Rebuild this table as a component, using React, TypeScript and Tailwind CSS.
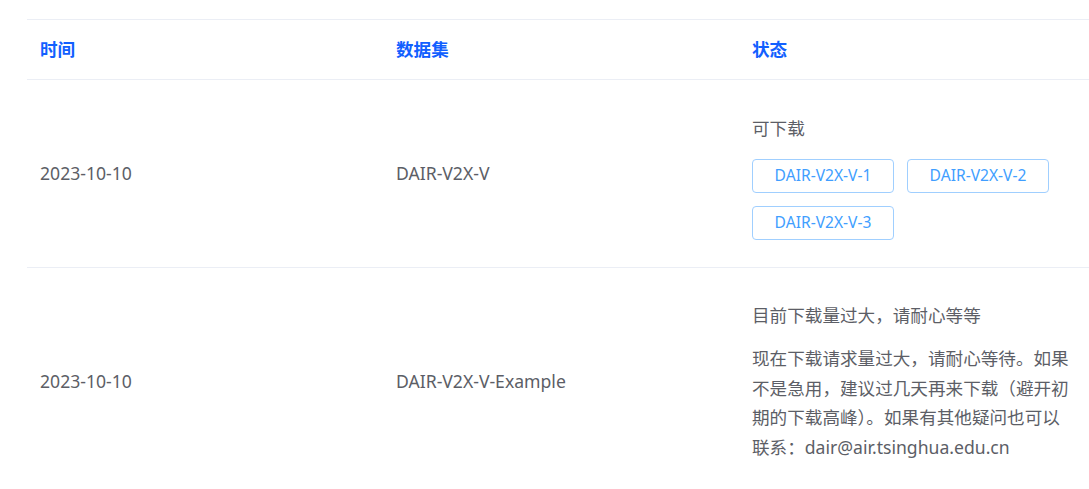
const FONT = "font-['Noto_Sans','Noto_Sans_CJK_SC',sans-serif]";

function Tag({ label }: { label: string }) {
  return (
    <span className="flex h-[34px] w-[142px] items-center justify-center rounded-[4px] border border-[#a0cfff] bg-white text-[15.6px] text-[#409eff]">
      {label}
    </span>
  );
}

function Cell({ children, className = '' }: { children: React.ReactNode; className?: string }) {
  return <div className={`px-[13px] ${className}`}>{children}</div>;
}

export default function App() {
  return (
    <div className={`min-h-screen w-full overflow-hidden bg-white ${FONT}`}>
      <div className="ml-[27px] mt-[19px] w-[1068px] text-[17.6px] text-[#5c5e66]">
        {/* header */}
        <div className="grid h-[61px] grid-cols-3 items-center border-y border-[#ebeef5] font-bold text-[#1260ff]">
          <Cell>时间</Cell>
          <Cell>数据集</Cell>
          <Cell>状态</Cell>
        </div>

        <div className="grid grid-cols-3 items-center border-b border-[#ebeef5]">
          <Cell>2023-10-10</Cell>
          <Cell>DAIR-V2X-V</Cell>
          <Cell className="pb-[27px] pt-[33px]">
            <p className="leading-[30px]">可下载</p>
            <div className="mt-[16px] flex flex-wrap gap-[13px]">
              <Tag label="DAIR-V2X-V-1" />
              <Tag label="DAIR-V2X-V-2" />
              <Tag label="DAIR-V2X-V-3" />
            </div>
          </Cell>
        </div>

        <div className="grid grid-cols-3 items-center border-b border-[#ebeef5]">
          <Cell>2023-10-10</Cell>
          <Cell>DAIR-V2X-V-Example</Cell>
          <Cell className="py-8">
            <p className="leading-[30px]">目前下载量过大，请耐心等等</p>
            <p className="mt-[14px] leading-[29.7px]">
              现在下载请求量过大，请耐心等待。如果
              <br />
              不是急用，建议过几天再来下载（避开初
              <br />
              期的下载高峰）。如果有其他疑问也可以
              <br />
              联系：dair@air.tsinghua.edu.cn
            </p>
          </Cell>
        </div>
      </div>
    </div>
  );
}
